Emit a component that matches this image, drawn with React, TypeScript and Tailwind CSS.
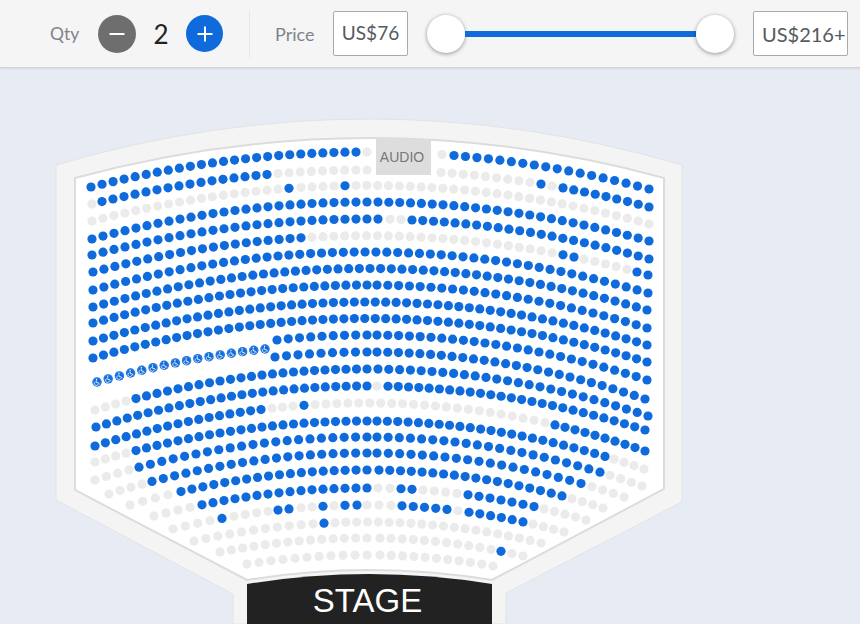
import React from 'react';

type Run = [number, number, number, 'b' | 'g'];
type Row = { c: number; l: [number, number]; r: [number, number]; runs: Run[]; chair?: boolean };

const rows: Row[] = [
  { c: 152, l: [91, 187], r: [649, 189], runs: [[91, 356, 25, 'b'], [367, 367, 1, 'g'], [442, 442, 1, 'g'], [454, 649, 18, 'b']] },
  { c: 170, l: [92, 204], r: [649, 207], runs: [[92, 92, 1, 'g'], [102, 267, 16, 'b'], [278, 367, 9, 'g'], [441, 530, 9, 'g'], [541, 541, 1, 'b'], [552, 552, 1, 'g'], [563, 649, 9, 'b']] },
  { c: 185.5, l: [92, 221], r: [649, 224], runs: [[92, 278, 18, 'g'], [289, 289, 1, 'b'], [301, 334, 4, 'g'], [345, 345, 1, 'b'], [356, 649, 28, 'g']] },
  { c: 202, l: [92, 239], r: [649, 241], runs: [[92, 367, 26, 'b'], [378, 649, 26, 'b']] },
  { c: 219, l: [92, 255], r: [649, 259], runs: [[92, 378, 27, 'b'], [390, 401, 2, 'g'], [412, 649, 23, 'b']] },
  { c: 235.7, l: [93, 272], r: [648, 275], runs: [[93, 301, 20, 'b'], [312, 552, 23, 'g'], [563, 574, 2, 'b'], [584, 627, 5, 'g'], [637, 648, 2, 'b']] },
  { c: 252, l: [93, 290], r: [648, 293], runs: [[93, 648, 52, 'b']] },
  { c: 268.5, l: [93, 307], r: [647, 310], runs: [[93, 647, 53, 'b']] },
  { c: 285, l: [93, 323], r: [647, 328], runs: [[93, 367, 27, 'b'], [377, 647, 26, 'b']] },
  { c: 302, l: [93, 341], r: [647, 345], runs: [[93, 647, 54, 'b']] },
  { c: 318.5, l: [93, 358], r: [647, 362], runs: [[93, 647, 54, 'b']] },
  { c: 335, l: [277, 340], r: [647, 380], runs: [[277, 367, 9, 'b'], [377, 647, 26, 'b']] },
  { c: 352, l: [275, 357], r: [645, 399], runs: [[275, 367, 9, 'b'], [377, 645, 26, 'b']] },
  { c: 343.5, l: [97, 382], r: [645, 382], runs: [[97, 265, 16, 'b']], chair: true },
  { c: 369, l: [95, 410], r: [648, 416], runs: [[95, 126, 4, 'g'], [136, 367, 23, 'b'], [378, 648, 26, 'b']] },
  { c: 386, l: [96, 427], r: [645, 430], runs: [[96, 367, 27, 'b'], [377, 377, 1, 'g'], [388, 645, 26, 'b']] },
  { c: 403, l: [95, 446], r: [645, 451], runs: [[95, 261, 17, 'b'], [272, 293, 3, 'g'], [304, 304, 1, 'b'], [315, 545, 22, 'g'], [555, 645, 10, 'b']] },
  { c: 421, l: [95, 462], r: [644, 469], runs: [[95, 126, 4, 'g'], [136, 367, 23, 'b'], [377, 605, 23, 'b'], [614, 644, 4, 'g']] },
  { c: 437, l: [95, 480], r: [642, 486], runs: [[95, 129, 4, 'g'], [139, 367, 21, 'b'], [377, 600, 21, 'b'], [610, 642, 4, 'g']] },
  { c: 453, l: [109, 494], r: [624, 497], runs: [[109, 142, 4, 'g'], [152, 367, 20, 'b'], [377, 581, 19, 'b'], [592, 624, 4, 'g']] },
  { c: 470, l: [130, 505], r: [603, 508], runs: [[130, 168, 4, 'g'], [181, 367, 18, 'b'], [379, 562, 18, 'b'], [572, 603, 4, 'g']] },
  { c: 488, l: [154, 516], r: [586, 520], runs: [[154, 190, 4, 'g'], [202, 367, 16, 'b'], [378, 390, 2, 'g'], [401, 412, 2, 'b'], [423, 457, 4, 'g'], [468, 534, 7, 'b'], [544, 586, 5, 'g']] },
  { c: 505, l: [173, 529], r: [564, 532], runs: [[173, 210, 4, 'g'], [222, 222, 1, 'b'], [234, 268, 4, 'g'], [278, 289, 2, 'b'], [301, 312, 2, 'g'], [323, 323, 1, 'b'], [334, 334, 1, 'g'], [345, 357, 2, 'b'], [367, 391, 3, 'g'], [402, 447, 5, 'b'], [458, 458, 1, 'g'], [469, 523, 6, 'b'], [533, 564, 4, 'g']] },
  { c: 522, l: [194, 541], r: [541, 543], runs: [[194, 313, 11, 'g'], [324, 324, 1, 'b'], [335, 541, 20, 'g']] },
  { c: 538, l: [220, 552], r: [523, 556], runs: [[220, 367, 14, 'g'], [380, 491, 11, 'g'], [501, 501, 1, 'b'], [512, 523, 2, 'g']] },
  { c: 555, l: [247, 564], r: [493, 566], runs: [[247, 367, 11, 'g'], [380, 493, 11, 'g']] },
];

const BLUE = '#0f6bdb';
const GREY = '#ebebeb';

function seatsOf(row: Row) {
  const kL = (row.l[1] - row.c) / Math.pow(row.l[0] - 367, 2);
  const kR = (row.r[1] - row.c) / Math.pow(row.r[0] - 367, 2);
  const out: { x: number; y: number; t: 'b' | 'g' }[] = [];
  for (const [a, b, n, t] of row.runs) {
    for (let i = 0; i < n; i++) {
      const x = n === 1 ? a : a + ((b - a) * i) / (n - 1);
      const d = x - 367;
      out.push({ x, y: row.c + (d < 0 ? kL : kR) * d * d, t });
    }
  }
  return out;
}

function Chair({ x, y }: { x: number; y: number }) {
  return (
    <g transform={`translate(${x} ${y})`}>
      <circle r={4.7} fill={BLUE} />
      <circle r={3.9} fill="none" stroke="#5a9ae8" strokeWidth={0.4} />
      <circle cx={-0.5} cy={-2.6} r={0.7} fill="#fff" />
      <path d="M-0.5 -1.6 L-0.3 0.8 L1.6 0.8 L2.4 2.4" fill="none" stroke="#fff" strokeWidth={0.8} />
      <path d="M-1.2 -0.4 A2 2 0 1 0 1.3 2" fill="none" stroke="#fff" strokeWidth={0.7} />
    </g>
  );
}

function SeatMap() {
  return (
    <svg viewBox="0 68 860 556" className="block h-[556px] w-[860px]">
      <path d="M56 165 Q369 73 682 165 L682 502 L506 593 L506 624 L233 624 L233 594 L56 500 Z" fill="#f4f4f4" stroke="#e2e3e6" strokeWidth={1} />
      <path d="M75 178 Q369.5 98 664 178 L664 489 L492 580 Q369.5 560 247 580 L75 490 Z" fill="#ffffff" stroke="#dcdcdc" strokeWidth={2} />
      <rect x={376} y={139} width={55} height={36} fill="#dddddd" />
      <text x={402} y={162} textAnchor="middle" fontSize={14} fill="#777777" fontFamily="'Liberation Sans', sans-serif">AUDIO</text>
      {rows.map((row, i) =>
        seatsOf(row).map((s, j) =>
          row.chair ? (
            <Chair key={`${i}-${j}`} x={s.x} y={s.y} />
          ) : (
            <circle key={`${i}-${j}`} cx={s.x} cy={s.y} r={4.6} fill={s.t === 'b' ? BLUE : GREY} />
          ),
        ),
      )}
      <path d="M247 584 Q369.5 564 492 584 L492 624 L247 624 Z" fill="#222222" />
      <text x={367.5} y={612} textAnchor="middle" fontSize={33} fill="#ffffff" fontFamily="'Liberation Sans', sans-serif">STAGE</text>
    </svg>
  );
}

export default function App() {
  return (
    <div className="flex h-[624px] w-[860px] flex-col overflow-hidden bg-[#e7ebf3] font-['Lato',sans-serif]">
      <header className="flex h-[68px] shrink-0 items-center border-b border-[#d2d3d6] bg-[#f5f5f5] pl-[50px] shadow-[0_1px_2px_rgba(0,0,0,0.08)]">
        <span className="mt-[2px] w-[48px] text-[17.5px] text-[#80848a]">Qty</span>
        <button className="flex h-[38px] w-[38px] items-center justify-center rounded-full bg-[#6e6e6e]">
          <svg width="18" height="18" viewBox="0 0 18 18"><path d="M1.5 9 H16.5" stroke="#fff" strokeWidth="2" /></svg>
        </button>
        <span className="w-[50px] text-center text-[26px] leading-none text-[#222222]">2</span>
        <button className="flex h-[37px] w-[37px] items-center justify-center rounded-full bg-[#0f6bdb]">
          <svg width="18" height="18" viewBox="0 0 18 18"><path d="M1.5 9 H16.5 M9 1.5 V16.5" stroke="#fff" strokeWidth="2" /></svg>
        </button>
        <div className="ml-[26px] h-[48px] w-px bg-[#e8e8e8]" />
        <span className="ml-[25px] mt-[2px] w-[58px] text-[18px] text-[#80848a]">Price</span>
        <div className="flex h-[45px] w-[75px] items-center justify-center rounded-[2px] border border-[#aaaaaa] bg-white text-[19px] text-[#555a60]">
          US$76
        </div>
        <div className="ml-[19px] flex w-[307px] items-center">
          <div className="h-[38px] w-[38px] shrink-0 rounded-full bg-white shadow-[0_1px_4px_rgba(0,0,0,0.4)]" />
          <div className="h-[6px] flex-1 bg-[#0f6bdb]" />
          <div className="h-[38px] w-[38px] shrink-0 rounded-full bg-white shadow-[0_1px_4px_rgba(0,0,0,0.4)]" />
        </div>
        <div className="ml-[19px] flex h-[45px] w-[95px] items-center rounded-[2px] border border-[#aaaaaa] bg-white pl-[8px] text-[20px] text-[#555a60]">
          US$216+
        </div>
      </header>
      <main className="flex-1">
        <SeatMap />
      </main>
    </div>
  );
}
